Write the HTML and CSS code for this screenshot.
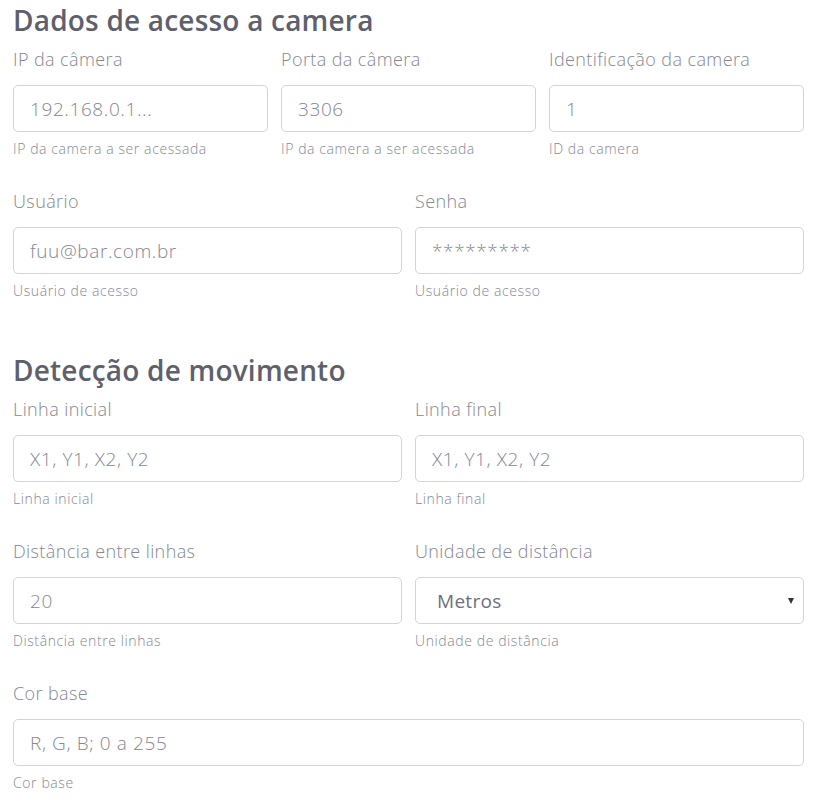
FILE: index.html
```html
<!DOCTYPE html>
<html lang="pt-BR">
<head>
<meta charset="utf-8">
<title>Câmera</title>
<link rel="stylesheet" href="styles.css">
</head>
<body>
<div class="page">
  <h2 class="section-title">Dados de acesso a camera</h2>
  <div class="row cols-3">
    <div class="field">
      <label class="label">IP da câmera</label>
      <input class="control" type="text" placeholder="192.168.0.1...">
      <small class="help">IP da camera a ser acessada</small>
    </div>
    <div class="field">
      <label class="label">Porta da câmera</label>
      <input class="control" type="text" placeholder="3306">
      <small class="help">IP da camera a ser acessada</small>
    </div>
    <div class="field">
      <label class="label">Identificação da camera</label>
      <input class="control" type="text" placeholder="1">
      <small class="help">ID da camera</small>
    </div>
  </div>
  <div class="row cols-2">
    <div class="field">
      <label class="label">Usuário</label>
      <input class="control" type="text" placeholder="fuu@bar.com.br">
      <small class="help">Usuário de acesso</small>
    </div>
    <div class="field">
      <label class="label">Senha</label>
      <input class="control" type="text" placeholder="*********">
      <small class="help">Usuário de acesso</small>
    </div>
  </div>

  <h2 class="section-title second">Detecção de movimento</h2>
  <div class="row cols-2">
    <div class="field">
      <label class="label">Linha inicial</label>
      <input class="control" type="text" placeholder="X1, Y1, X2, Y2">
      <small class="help">Linha inicial</small>
    </div>
    <div class="field">
      <label class="label">Linha final</label>
      <input class="control" type="text" placeholder="X1, Y1, X2, Y2">
      <small class="help">Linha final</small>
    </div>
  </div>
  <div class="row cols-2">
    <div class="field">
      <label class="label">Distância entre linhas</label>
      <input class="control" type="text" placeholder="20">
      <small class="help">Distância entre linhas</small>
    </div>
    <div class="field">
      <label class="label">Unidade de distância</label>
      <div class="select-wrap">
        <select class="control select">
          <option>Metros</option>
        </select>
      </div>
      <small class="help">Unidade de distância</small>
    </div>
  </div>
  <div class="row cols-1">
    <div class="field">
      <label class="label">Cor base</label>
      <input class="control" type="text" placeholder="R, G, B; 0 a 255">
      <small class="help">Cor base</small>
    </div>
  </div>
</div>
</body>
</html>
```

FILE: styles.css
```css
* { box-sizing: border-box; }
html, body { margin: 0; padding: 0; background: #fff; }
body {
  font-family: "Open Sans", "Noto Sans", "DejaVu Sans", sans-serif;
  color: #858796;
}
.page {
  width: 791px;
  margin-left: 13px;
}
.section-title {
  margin: 0;
  font-size: 28px;
  line-height: 40px;
  font-weight: 600;
  color: #5e606c;
  letter-spacing: 0.2px;
}
.section-title.second {
  margin-top: 49px;
}
.row {
  display: grid;
  column-gap: 13px;
  margin-bottom: 23px;
}
.cols-3 { grid-template-columns: repeat(3, 1fr); }
.cols-2 { grid-template-columns: repeat(2, 1fr); }
.cols-1 { grid-template-columns: 1fr; }
.field {
  display: flex;
  flex-direction: column;
}
.label {
  font-size: 18px;
  line-height: 26px;
  font-weight: 300;
  letter-spacing: 0.4px;
  color: #858796;
  margin-top: 6px;
  margin-bottom: 13px;
}
.control {
  display: block;
  width: 100%;
  height: 47px;
  padding: 0 16px;
  border: 1px solid #d1d3e2;
  border-radius: 5px;
  background: #fff;
  font-family: inherit;
  font-size: 19px;
  font-weight: 300;
  letter-spacing: 0.6px;
  color: #6e707e;
  outline: none;
}
.control::placeholder { color: #858796; opacity: 1; }
.select-wrap { position: relative; }
.select {
  appearance: none;
  -webkit-appearance: none;
  padding-left: 21px;
  color: #6e707e;
  font-weight: 400;
  letter-spacing: 0.3px;
}
.select-wrap::after {
  content: "";
  position: absolute;
  right: 10px;
  top: 21px;
  border-left: 3.5px solid transparent;
  border-right: 3.5px solid transparent;
  border-top: 6px solid #333;
}
.help {
  display: block;
  font-size: 14px;
  line-height: 21px;
  font-weight: 300;
  letter-spacing: 0.6px;
  color: #858796;
  margin-top: 6px;
}
```
